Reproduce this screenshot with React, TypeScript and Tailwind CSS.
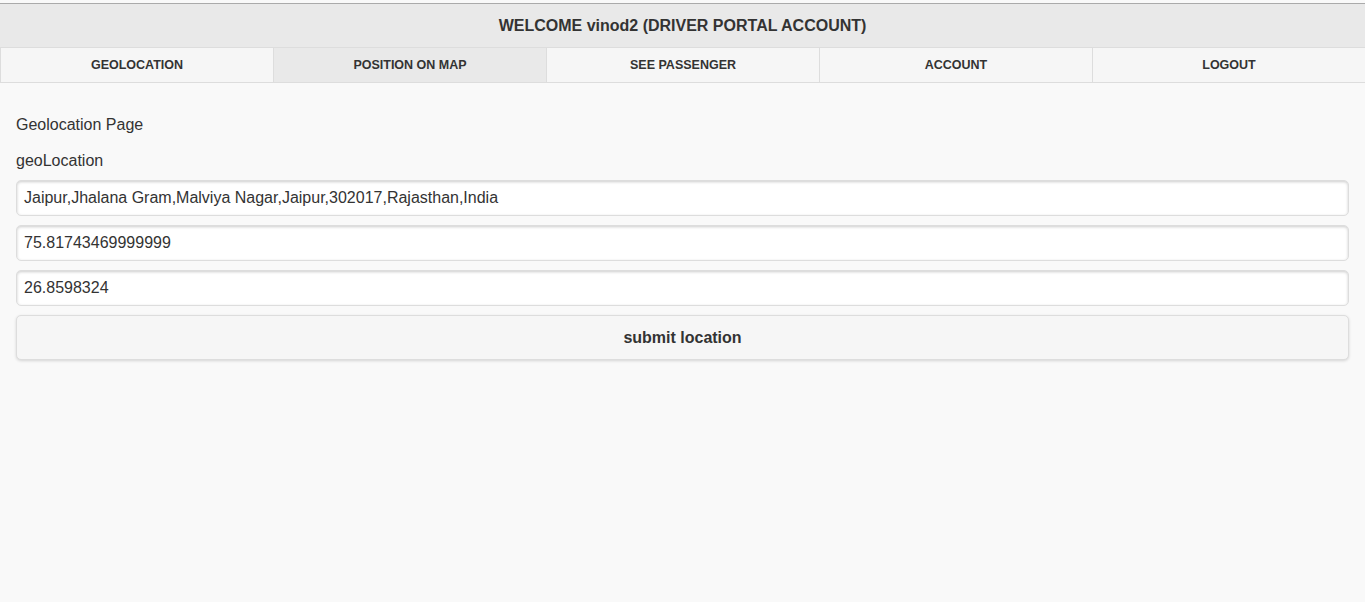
import React from 'react';

const tabs = ['GEOLOCATION', 'POSITION ON MAP', 'SEE PASSENGER', 'ACCOUNT', 'LOGOUT'];

const fields = [
  'Jaipur,Jhalana Gram,Malviya Nagar,Jaipur,302017,Rajasthan,India',
  '75.81743469999999',
  '26.8598324',
];

export default function App() {
  return (
    <div className="min-h-[602px] bg-[#f9f9f9] pt-[3px] text-[#333] font-['Liberation_Sans',Arial,sans-serif]">
      {/* header */}
      <div className="border-t border-[#aaa] bg-[#e9e9e9]">
        <h1 className="h-[43px] flex items-center justify-center text-[16px] font-bold">
          WELCOME vinod2 (DRIVER PORTAL ACCOUNT)
        </h1>
        <div className="grid grid-cols-5 border-y border-[#ddd]">
          {tabs.map((t, i) => (
            <a
              key={t}
              className={`h-[34px] flex items-center justify-center text-[12.5px] font-bold border-l border-[#ddd] ${
                i === 1 ? 'bg-[#e9e9e9]' : 'bg-[#f6f6f6]'
              }`}
            >
              {t}
            </a>
          ))}
        </div>
      </div>

      {/* content */}
      <div className="px-4 pt-[32px]">
        <p className="text-[16px] leading-[20px]">Geolocation Page</p>
        <p className="text-[16px] leading-[20px] mt-4">geoLocation</p>
        <div className="mt-[9px] flex flex-col gap-[9px]">
          {fields.map((f) => (
            <div
              key={f}
              className="h-[36px] flex items-center px-[7px] bg-white border border-[#ddd] rounded-[5px] shadow-[inset_0_1px_3px_rgba(0,0,0,0.2)] text-[16px]"
            >
              {f}
            </div>
          ))}
          <button className="h-[45px] w-full bg-[#f6f6f6] border border-[#ddd] rounded-[5px] shadow-[0_1px_3px_rgba(0,0,0,0.15)] text-[16px] font-bold text-[#333]">
            submit location
          </button>
        </div>
      </div>
    </div>
  );
}
